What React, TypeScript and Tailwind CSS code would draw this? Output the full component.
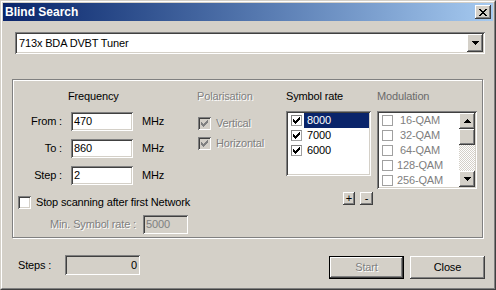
const raised =
  "shadow-[inset_-1px_-1px_0_#404040,inset_1px_1px_0_#fff,inset_-2px_-2px_0_#808080,inset_2px_2px_0_#d4d0c8]";
const sunken =
  "shadow-[inset_1px_1px_0_#808080,inset_-1px_-1px_0_#fff,inset_2px_2px_0_#404040,inset_-2px_-2px_0_#d4d0c8]";
const disabledText = "text-[#808080] [text-shadow:1px_1px_0_#fff]";

// pixel glyphs, [x, y]
const CHECK = [
  [6, 0], [5, 1], [6, 1], [0, 2], [4, 2], [5, 2], [6, 2], [0, 3], [1, 3], [3, 3], [4, 3], [5, 3],
  [0, 4], [1, 4], [2, 4], [3, 4], [4, 4], [1, 5], [2, 5], [3, 5], [2, 6],
];
const CROSS = [
  [0, 0], [1, 0], [6, 0], [7, 0], [1, 1], [2, 1], [5, 1], [6, 1], [2, 2], [3, 2], [4, 2], [5, 2],
  [3, 3], [4, 3], [2, 4], [3, 4], [4, 4], [5, 4], [1, 5], [2, 5], [5, 5], [6, 5],
  [0, 6], [1, 6], [6, 6], [7, 6],
];

function Pixels({ dots, w, h, color }: { dots: number[][]; w: number; h: number; color: string }) {
  return (
    <svg width={w} height={h} viewBox={`0 0 ${w} ${h}`} shapeRendering="crispEdges" aria-hidden>
      {dots.map(([x, y]) => (
        <rect key={`${x}-${y}`} x={x} y={y} width="1" height="1" fill={color} />
      ))}
    </svg>
  );
}

function Arrow({ up = false }: { up?: boolean }) {
  return (
    <svg width="7" height="4" viewBox="0 0 7 4" shapeRendering="crispEdges" aria-hidden>
      <path
        d={
          up
            ? "M3 0h1v1h1v1h1v1h1v1H0V3h1V2h1V1h1z"
            : "M0 0h7v1H6v1H5v1H4v1H3V3H2V2H1V1H0z"
        }
        fill="#000"
      />
    </svg>
  );
}

function CheckBox({ checked = false, disabled = false }: { checked?: boolean; disabled?: boolean }) {
  return (
    <div
      className={`w-[13px] h-[13px] shrink-0 p-[2px] ${sunken} ${disabled ? "bg-[#d4d0c8]" : "bg-white"}`}
    >
      <div className={`w-[9px] h-[9px] flex items-center justify-center ${disabled ? "bg-[#d4d0c8]" : "bg-white"}`}>
        {checked && <Pixels dots={CHECK} w={7} h={7} color={disabled ? "#808080" : "#000"} />}
      </div>
    </div>
  );
}

function ListCheck({ checked = false, disabled = false }: { checked?: boolean; disabled?: boolean }) {
  return (
    <div
      className={`w-[11px] h-[11px] shrink-0 border flex items-center justify-center bg-white ${
        disabled ? "border-[#a0a0a0]" : "border-t-[#808080] border-l-[#808080] border-b-[#a0a0a0] border-r-[#a0a0a0]"
      }`}
    >
      {checked && <Pixels dots={CHECK} w={7} h={7} color="#000" />}
    </div>
  );
}

function FreqRow({ label, value }: { label: string; value: string }) {
  return (
    <div className="h-[19px] flex items-center">
      <span className="w-[44px] text-right">{label}</span>
      <div className={`ml-[9px] w-[62px] h-[19px] bg-white p-[2px] pl-[3px] flex items-center ${sunken}`}>
        {value}
      </div>
      <span className="ml-[9px]">MHz</span>
    </div>
  );
}

export default function App() {
  const rates = ["8000", "7000", "6000"];
  const mods = ["16-QAM", "32-QAM", "64-QAM", "128-QAM", "256-QAM"];

  return (
    <div className="w-[496px] h-[290px] font-['Liberation_Sans',Arial,sans-serif] text-[11px] leading-[13px] tracking-[-0.15px] text-black bg-[#d4d0c8] border border-t-[#d4d0c8] border-l-[#d4d0c8] border-b-[#404040] border-r-[#404040]">
      <div className="h-full p-px border border-t-white border-l-white border-b-[#808080] border-r-[#808080] flex flex-col">
        {/* title bar */}
        <div className="h-[18px] shrink-0 flex items-center justify-between bg-linear-to-r from-[#0a246a] to-[#a6caf0]">
          <span className="pl-[2px] text-[12px] tracking-normal font-bold text-white">Blind Search</span>
          <div className={`mr-[2px] w-[16px] h-[14px] flex items-center justify-center bg-[#d4d0c8] ${raised}`}>
            <Pixels dots={CROSS} w={8} h={7} color="#000" />
          </div>
        </div>

        {/* tuner combo */}
        <div className={`ml-[12px] mt-[11px] w-[470px] h-[22px] p-[2px] bg-white flex ${sunken}`}>
          <div className="flex-1 pl-[2px] flex items-center">713x BDA DVBT Tuner</div>
          <div className={`w-[16px] h-[18px] flex items-center justify-center bg-[#d4d0c8] ${raised}`}>
            <Arrow />
          </div>
        </div>

        {/* group box */}
        <div className="ml-[9px] mt-[25px] w-[471px] h-[159px] border border-[#808080] shadow-[1px_1px_0_#fff,inset_1px_1px_0_#fff] pl-[5px] pt-[10px] flex">
          <div className="w-[179px] flex flex-col">
            <div className="h-[13px] pl-[50px]">Frequency</div>
            <div className="mt-[9px] flex flex-col gap-[8px]">
              <FreqRow label="From :" value="470" />
              <FreqRow label="To :" value="860" />
              <FreqRow label="Step :" value="2" />
            </div>
            <div className="mt-[11px] h-[13px] flex items-center">
              <CheckBox />
              <span className="ml-[5px] whitespace-nowrap">Stop scanning after first Network</span>
            </div>
            <div className="mt-[6px] h-[19px] flex items-center">
              <span className={`w-[118px] text-right ${disabledText}`}>Min. Symbol rate :</span>
              <div className={`ml-[7px] w-[45px] h-[19px] p-[2px] pl-[3px] flex items-center bg-[#d4d0c8] text-[#808080] ${sunken}`}>
                5000
              </div>
            </div>
          </div>

          <div className="w-[89px] flex flex-col">
            <div className={`h-[13px] ${disabledText}`}>Polarisation</div>
            <div className="mt-[14px] flex flex-col gap-[7px]">
              {["Vertical", "Horizontal"].map((p) => (
                <div key={p} className="h-[13px] flex items-center pl-px">
                  <CheckBox checked disabled />
                  <span className={`ml-[5px] ${disabledText}`}>{p}</span>
                </div>
              ))}
            </div>
          </div>

          <div className="w-[91px] flex flex-col">
            <div className="h-[13px]">Symbol rate</div>
            <div className={`mt-[8px] w-[85px] h-[65px] p-[2px] bg-white overflow-hidden ${sunken}`}>
              {rates.map((r, i) => (
                <div key={r} className="h-[15px] flex items-center pl-[3px]">
                  <ListCheck checked />
                  <div
                    className={`ml-[2px] flex-1 h-full pl-[3px] flex items-center ${
                      i === 0 ? "bg-[#0a246a] text-white" : ""
                    }`}
                  >
                    {r}
                  </div>
                </div>
              ))}
            </div>
            <div className="mt-[16px] pl-[57px] flex gap-[5px]">
              <div className={`w-[12px] h-[13px] flex items-center justify-center bg-[#d4d0c8] ${raised}`}>+</div>
              <div className={`w-[13px] h-[13px] flex items-center justify-center bg-[#d4d0c8] ${raised}`}>-</div>
            </div>
          </div>

          <div className="flex flex-col">
            <div className="h-[13px] text-[#6b6b6b]">Modulation</div>
            <div className={`mt-[8px] w-[100px] h-[78px] p-[2px] bg-white flex ${sunken}`}>
              <div className="flex-1 overflow-hidden">
                {mods.map((m) => (
                  <div key={m} className="h-[15px] flex items-center pl-[3px]">
                    <ListCheck disabled />
                    <span className="ml-[2px] w-[50px] text-center whitespace-nowrap text-[#808080]">{m}</span>
                  </div>
                ))}
              </div>
              <div className="w-[16px] flex flex-col">
                <div className={`h-[16px] flex items-center justify-center bg-[#d4d0c8] ${raised}`}>
                  <Arrow up />
                </div>
                <div className={`h-[16px] bg-[#d4d0c8] ${raised}`} />
                <div className="flex-1 bg-[repeating-conic-gradient(#fff_0_25%,#d4d0c8_0_50%)] bg-[length:2px_2px]" />
                <div className={`h-[16px] flex items-center justify-center bg-[#d4d0c8] ${raised}`}>
                  <Arrow />
                </div>
              </div>
            </div>
          </div>
        </div>

        {/* bottom row */}
        <div className="mt-[17px] pl-[15px] flex items-start">
          <span className="w-[47px] h-[20px] flex items-center">Steps :</span>
          <div className={`w-[75px] h-[20px] p-[2px] pr-[3px] flex items-center justify-end ${sunken}`}>0</div>
          <div className="ml-[189px] mt-px w-[75px] h-[23px] border border-black">
            <div className={`h-full flex items-center justify-center ${raised} ${disabledText}`}>Start</div>
          </div>
          <div className={`ml-[6px] mt-px w-[75px] h-[23px] flex items-center justify-center ${raised}`}>Close</div>
        </div>
      </div>
    </div>
  );
}
